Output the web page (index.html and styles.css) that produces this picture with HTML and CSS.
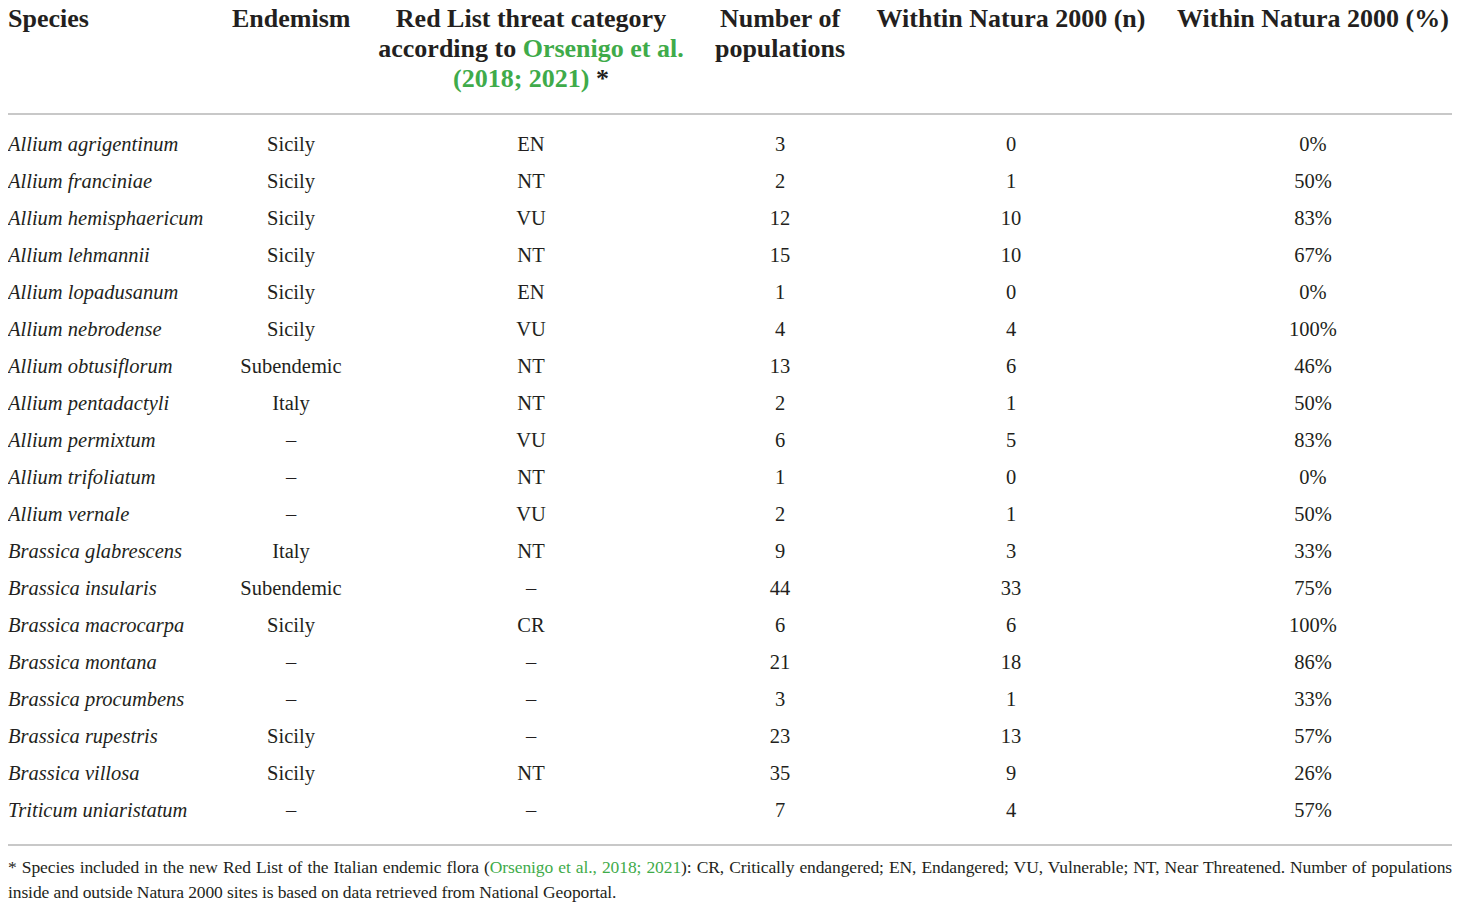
FILE: index.html
```html
<!DOCTYPE html>
<html lang="en">
<head>
  <meta charset="UTF-8"/>
  <title>Endemic species and Natura 2000</title>
  <link rel="stylesheet" href="styles.css">
</head>
<body>
  <table class="species-table">
    <colgroup>
      <col class="c-species"><col class="c-end"><col class="c-red"><col class="c-num"><col class="c-n"><col class="c-pct">
    </colgroup>
    <thead>
      <tr>
        <th class="left">Species</th>
        <th>Endemism</th>
        <th>Red List threat category<br>according to <a href="#">Orsenigo et al.</a><br><a href="#">(2018; 2021)</a> *</th>
        <th>Number of<br>populations</th>
        <th>Withtin Natura 2000 (n)</th>
        <th>Within Natura 2000 (%)</th>
      </tr>
    </thead>
    <tbody>
      <tr><td class="left"><i>Allium agrigentinum</i></td><td>Sicily</td><td>EN</td><td>3</td><td>0</td><td>0%</td></tr>
      <tr><td class="left"><i>Allium franciniae</i></td><td>Sicily</td><td>NT</td><td>2</td><td>1</td><td>50%</td></tr>
      <tr><td class="left"><i>Allium hemisphaericum</i></td><td>Sicily</td><td>VU</td><td>12</td><td>10</td><td>83%</td></tr>
      <tr><td class="left"><i>Allium lehmannii</i></td><td>Sicily</td><td>NT</td><td>15</td><td>10</td><td>67%</td></tr>
      <tr><td class="left"><i>Allium lopadusanum</i></td><td>Sicily</td><td>EN</td><td>1</td><td>0</td><td>0%</td></tr>
      <tr><td class="left"><i>Allium nebrodense</i></td><td>Sicily</td><td>VU</td><td>4</td><td>4</td><td>100%</td></tr>
      <tr><td class="left"><i>Allium obtusiflorum</i></td><td>Subendemic</td><td>NT</td><td>13</td><td>6</td><td>46%</td></tr>
      <tr><td class="left"><i>Allium pentadactyli</i></td><td>Italy</td><td>NT</td><td>2</td><td>1</td><td>50%</td></tr>
      <tr><td class="left"><i>Allium permixtum</i></td><td>–</td><td>VU</td><td>6</td><td>5</td><td>83%</td></tr>
      <tr><td class="left"><i>Allium trifoliatum</i></td><td>–</td><td>NT</td><td>1</td><td>0</td><td>0%</td></tr>
      <tr><td class="left"><i>Allium vernale</i></td><td>–</td><td>VU</td><td>2</td><td>1</td><td>50%</td></tr>
      <tr><td class="left"><i>Brassica glabrescens</i></td><td>Italy</td><td>NT</td><td>9</td><td>3</td><td>33%</td></tr>
      <tr><td class="left"><i>Brassica insularis</i></td><td>Subendemic</td><td>–</td><td>44</td><td>33</td><td>75%</td></tr>
      <tr><td class="left"><i>Brassica macrocarpa</i></td><td>Sicily</td><td>CR</td><td>6</td><td>6</td><td>100%</td></tr>
      <tr><td class="left"><i>Brassica montana</i></td><td>–</td><td>–</td><td>21</td><td>18</td><td>86%</td></tr>
      <tr><td class="left"><i>Brassica procumbens</i></td><td>–</td><td>–</td><td>3</td><td>1</td><td>33%</td></tr>
      <tr><td class="left"><i>Brassica rupestris</i></td><td>Sicily</td><td>–</td><td>23</td><td>13</td><td>57%</td></tr>
      <tr><td class="left"><i>Brassica villosa</i></td><td>Sicily</td><td>NT</td><td>35</td><td>9</td><td>26%</td></tr>
      <tr><td class="left"><i>Triticum uniaristatum</i></td><td>–</td><td>–</td><td>7</td><td>4</td><td>57%</td></tr>
    </tbody>
  </table>
  <p class="note"><span class="note-first">* Species included in the new Red List of the Italian endemic flora (<a href="#">Orsenigo et al., 2018; 2021</a>): CR, Critically endangered; EN, Endangered; VU, Vulnerable; NT, Near Threatened. Number of populations</span>inside and outside Natura 2000 sites is based on data retrieved from National Geoportal.</p>
</body>
</html>
```

FILE: styles.css
```css
* { box-sizing:border-box; }
body {
  margin:0 8px; background:#fff; color:#231f20;
  font-family:"Liberation Serif","Times New Roman",serif;
}
a { color:#3fab4a; text-decoration:none; }
.species-table {
  width:1444px; border-collapse:collapse; table-layout:fixed;
}
.c-species { width:224px; }
.c-end { width:118px; }
.c-red { width:362px; }
.c-num { width:136px; }
.c-n { width:326px; }
.c-pct { width:278px; }
th {
  font-size:26px; line-height:30px; font-weight:bold;
  text-align:center; vertical-align:top;
  padding:4px 0 19px; white-space:nowrap;
  border-bottom:2px solid #c8c8c8;
}
td {
  font-size:20.5px; line-height:25px;
  text-align:center; padding:6px 0; white-space:nowrap;
}
tbody tr:first-child td { padding-top:17px; }
tbody tr:last-child td { padding-bottom:21px; border-bottom:2px solid #c8c8c8; }
.left { text-align:left; }
.note {
  margin:0; padding-top:9px;
  font-size:17.5px; line-height:25px; letter-spacing:-0.1px;
}
.note-first {
  display:block; white-space:nowrap;
  text-align:justify; text-align-last:justify;
}
```
